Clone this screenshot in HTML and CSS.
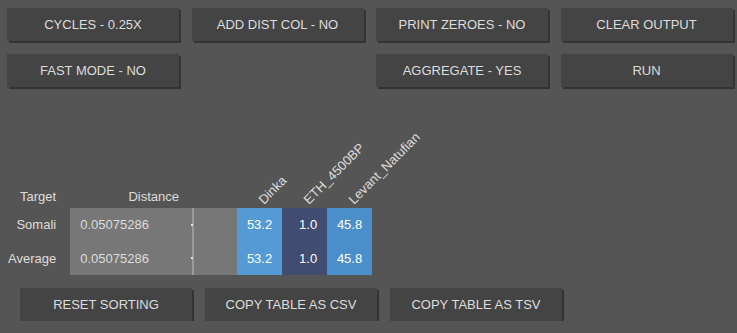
FILE: index.html
```html
<!DOCTYPE html>
<html lang="en">

<head>
    <meta charset="UTF-8">
    <title>Admixture Runner</title>
    <link rel="stylesheet" href="styles.css">
</head>

<body>
    <div class="controls">
        <button class="btn">CYCLES - 0.25X</button>
        <button class="btn">ADD DIST COL - NO</button>
        <button class="btn">PRINT ZEROES - NO</button>
        <button class="btn">CLEAR OUTPUT</button>
        <button class="btn">FAST MODE - NO</button>
        <span></span>
        <button class="btn">AGGREGATE - YES</button>
        <button class="btn">RUN</button>
    </div>
    <div class="output">
        <table class="result">
            <thead>
                <tr>
                    <th class="col-target">Target</th>
                    <th class="col-dist">Distance</th>
                    <th class="col-pop"><div class="rot-wrap"><span class="rot">Dinka</span></div></th>
                    <th class="col-pop"><div class="rot-wrap"><span class="rot">ETH_4500BP</span></div></th>
                    <th class="col-pop"><div class="rot-wrap"><span class="rot">Levant_Natufian</span></div></th>
                </tr>
            </thead>
            <tbody>
                <tr>
                    <td class="col-target">Somali</td>
                    <td class="dist"><div class="dist-inner"><span class="dist-val">0.05075286</span><i class="dot"></i></div></td>
                    <td class="pct c1">53.2</td>
                    <td class="pct c2">1.0</td>
                    <td class="pct c3">45.8</td>
                </tr>
                <tr>
                    <td class="col-target">Average</td>
                    <td class="dist"><div class="dist-inner"><span class="dist-val">0.05075286</span><i class="dot"></i></div></td>
                    <td class="pct c1">53.2</td>
                    <td class="pct c2">1.0</td>
                    <td class="pct c3">45.8</td>
                </tr>
            </tbody>
        </table>
        <div class="table-actions">
            <button class="btn">RESET SORTING</button>
            <button class="btn">COPY TABLE AS CSV</button>
            <button class="btn">COPY TABLE AS TSV</button>
        </div>
    </div>
</body>

</html>
```

FILE: styles.css
```css
body {
    margin: 0;
    padding: 8px 0 0 7px;
    background: #555555;
    color: #dddddd;
    font-family: 'Liberation Sans', Arial, sans-serif;
    font-size: 13px;
}

.btn {
    height: 33px;
    width: 172px;
    padding: 0;
    border: none;
    background: #444444;
    color: #dddddd;
    font-family: 'Liberation Sans', Arial, sans-serif;
    font-size: 13px;
    box-shadow: 2px 2px 0 #333333;
    cursor: pointer;
}

.controls {
    display: grid;
    grid-template-columns: repeat(4, 172px);
    column-gap: 12.5px;
    row-gap: 13px;
}

.output {
    margin-top: 97px;
    padding-left: 1px;
}

.result {
    border-collapse: collapse;
    border-spacing: 0;
}

.result th {
    font-weight: normal;
    height: 24px;
    padding: 0;
    vertical-align: middle;
    white-space: nowrap;
}

.result td {
    height: 33.5px;
    padding: 0;
    white-space: nowrap;
}

.col-target {
    text-align: right;
    padding-right: 14px !important;
}

.col-dist {
    width: 167px;
    text-align: center;
}

.result th.col-pop {
    width: 45px;
    text-align: left;
    vertical-align: bottom;
}

.rot-wrap {
    width: 0;
    height: 0;
    overflow: visible;
}

.rot {
    display: inline-block;
    transform: translate(29px, -16px) rotate(-45deg);
    transform-origin: 0 100%;
}

.dist {
    width: 167px;
    background: linear-gradient(to right, #777777 122px, #999999 122px, #999999 124px, #777777 124px);
}

.dist-inner {
    display: flex;
    align-items: center;
    padding-left: 10px;
}

.dist-val {
    width: 111px;
}

.dot {
    width: 2px;
    height: 2px;
    background: #d8e4ee;
}

.pct {
    width: 35px;
    text-align: right;
    padding-right: 10px !important;
    color: #ffffff;
}

.c1 {
    background: #549bd6;
}

.c2 {
    background: #404d70;
}

.c3 {
    background: #4a8fcc;
}

.table-actions {
    display: flex;
    gap: 13px;
    margin: 13px 0 0 12px;
}
```
